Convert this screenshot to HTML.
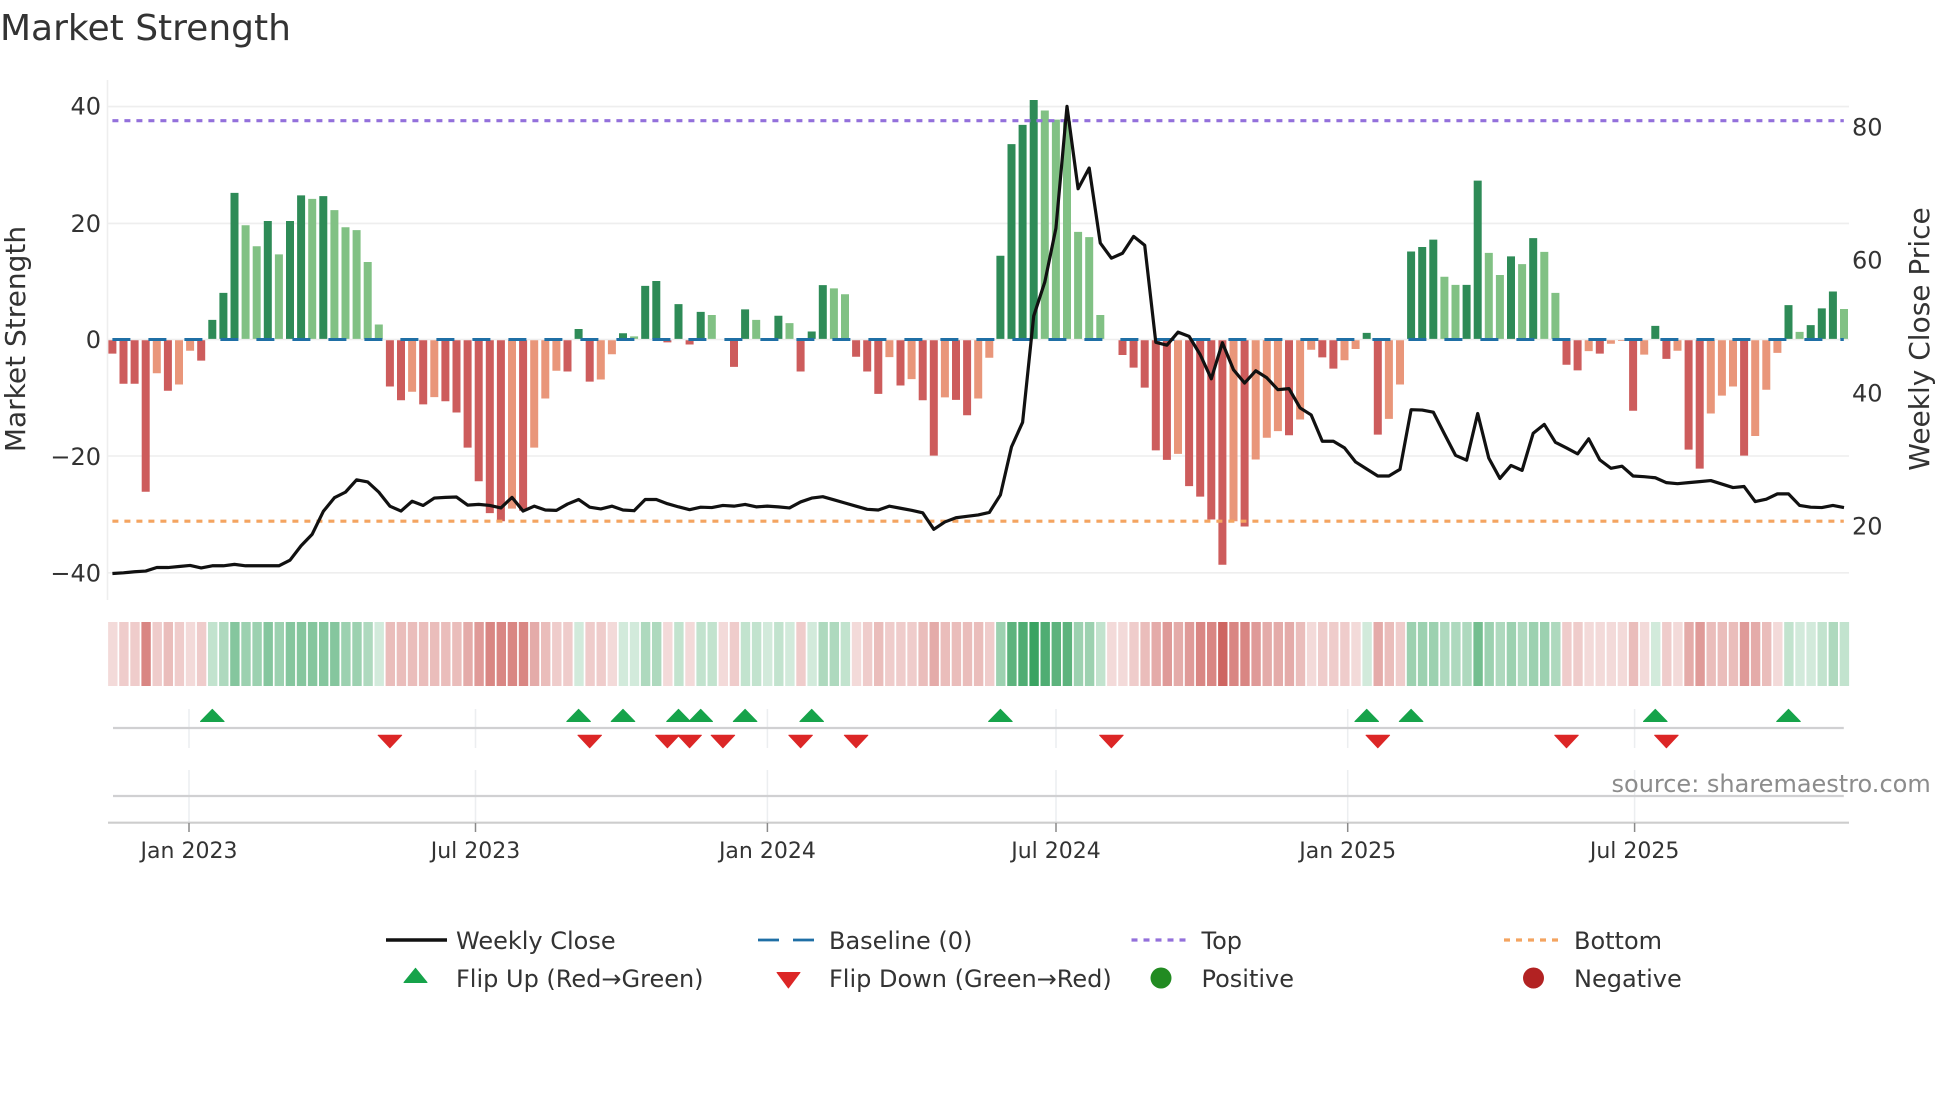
<!DOCTYPE html>
<html lang="en">
<head>
<meta charset="utf-8">
<title>Market Strength</title>
<style>
html,body{margin:0;padding:0;background:#fff;width:1960px;height:1102px;overflow:hidden}
svg{display:block}
text{font-family:"DejaVu Sans","Liberation Sans",sans-serif;fill:#333}
.ns{vector-effect:non-scaling-stroke;fill:none}
.t{font-size:24px}
.x{font-size:22px;text-anchor:middle}
.l{font-size:24px}
</style>
</head>
<body>
<svg width="1960" height="1102" viewBox="0 0 1960 1102" xmlns="http://www.w3.org/2000/svg">
<defs>
<path id="u" d="M-11.8 721.5H11.8L0 709.3Z" fill="#16a34a" stroke="#16a34a" stroke-width="1" stroke-linejoin="round"/>
<path id="d" d="M-11.8 735.2H11.8L0 747.8Z" fill="#dc2626" stroke="#dc2626" stroke-width="1" stroke-linejoin="round"/>
</defs>
<text x="0" y="40" font-size="36">Market Strength</text>

<!-- grid -->
<g stroke="#eeeeee" stroke-width="1.6" fill="none">
<path d="M107.5 80V600"/>
<path d="M108 106.6H1849M108 223.4H1849M108 456H1849M108 572.8H1849M108 339.5H1849"/>
</g>

<!-- bars -->
<g transform="translate(112.4,60) scale(11.1,0.35075)">
<path class="ns" stroke="#2e8b57" stroke-width="8" d="M9 795V741M10 795V664M11 795V379M14 795V459M16 795V459M17 795V386M19 795V388M42 795V767M46 795V779M48 795V644M49 795V630M51 795V696M53 795V718M57 795V711M60 795V729M63 795V774M64 795V642M80 795V558M81 795V240M82 795V185M83 795V114M113 795V778M117 795V546M118 795V533M119 795V512M122 795V641M123 795V344M126 795V560M128 795V508M139 795V758M151 795V699M153 795V756M154 795V708M155 795V660"/>
<path class="ns" stroke="#81c184" stroke-width="8" d="M12 795V471M13 795V531M15 795V554M18 795V396M20 795V428M21 795V477M22 795V485M23 795V576M24 795V754M47 795V788M54 795V727M58 795V741M61 795V750M65 795V651M66 795V668M84 795V144M85 795V170M86 795V175M87 795V490M88 795V505M89 795V727M120 795V618M121 795V641M124 795V550M125 795V613M127 795V582M129 795V547M130 795V664M152 795V775M156 795V710"/>
<path class="ns" stroke="#cd5c5c" stroke-width="8" d="M0 799V837M1 799V923M2 799V923M3 799V1231M5 799V943M8 799V857M25 799V931M26 799V970M28 799V982M30 799V973M31 799V1005M32 799V1105M33 799V1201M34 799V1292M35 799V1315M37 799V1285M41 799V888M43 799V917M50 799V805M52 799V811M56 799V875M62 799V888M67 799V846M68 799V888M69 799V952M71 799V928M73 799V970M74 799V1128M76 799V969M77 799V1013M91 799V841M92 799V877M93 799V934M94 799V1113M95 799V1140M97 799V1215M98 799V1245M99 799V1310M100 799V1439M102 799V1330M106 799V1070M109 799V848M110 799V880M114 799V1068M131 799V869M132 799V885M134 799V837M137 799V1000M140 799V852M142 799V1111M143 799V1165M147 799V1128"/>
<path class="ns" stroke="#e9967a" stroke-width="8" d="M4 799V893M6 799V925M7 799V829M27 799V946M29 799V961M36 799V1279M38 799V1105M39 799V965M40 799V886M44 799V911M45 799V839M70 799V847M72 799V910M75 799V962M78 799V965M79 799V849M96 799V1123M101 799V1315M103 799V1139M104 799V1077M105 799V1058M107 799V1025M108 799V826M111 799V856M112 799V824M115 799V1023M116 799V925M133 799V830M135 799V809M136 799V801M138 799V840M141 799V829M144 799V1008M145 799V957M146 799V931M148 799V1072M149 799V940M150 799V835"/>
</g>

<!-- reference lines -->
<path d="M112.4 339.5H1843.8" stroke="#1f6fa5" stroke-width="3" stroke-dasharray="18 18" fill="none"/>
<path d="M112.4 120.7H1843.8" stroke="#9370db" stroke-width="3.2" stroke-dasharray="6 6" fill="none"/>
<path d="M112.4 521.2H1843.8" stroke="#f4a460" stroke-width="3.2" stroke-dasharray="6 6" fill="none"/>

<!-- price line -->
<g transform="translate(112.4,60) scale(11.1,0.35075)">
<polyline class="ns" stroke="#111111" stroke-width="3.2" stroke-linejoin="round" points="0,1464 1,1462 2,1459 3,1457 4,1447 5,1447 6,1444 7,1441 8,1448 9,1442 10,1442 11,1438 12,1442 13,1442 14,1442 15,1442 16,1426 17,1385 18,1352 19,1287 20,1248 21,1232 22,1197 23,1203 24,1232 25,1272 26,1286 27,1258 28,1270 29,1249 30,1247 31,1246 32,1269 33,1267 34,1270 35,1277 36,1247 37,1286 38,1272 39,1283 40,1284 41,1266 42,1253 43,1275 44,1280 45,1272 46,1283 47,1285 48,1253 49,1253 50,1265 51,1274 52,1282 53,1275 54,1276 55,1270 56,1272 57,1267 58,1274 59,1272 60,1274 61,1277 62,1260 63,1249 64,1245 65,1254 66,1263 67,1272 68,1281 69,1283 70,1272 71,1278 72,1284 73,1291 74,1338 75,1317 76,1305 77,1301 78,1297 79,1290 80,1240 81,1103 82,1033 83,730 84,633 85,480 86,132 87,367 88,308 89,522 90,565 91,551 92,503 93,528 94,805 95,813 96,776 97,788 98,840 99,909 100,806 101,883 102,921 103,886 104,906 105,940 106,937 107,992 108,1012 109,1087 110,1087 111,1106 112,1146 113,1166 114,1186 115,1186 116,1167 117,997 118,998 119,1004 120,1066 121,1127 122,1141 123,1008 124,1135 125,1193 126,1156 127,1170 128,1064 129,1039 130,1090 131,1106 132,1123 133,1080 134,1140 135,1164 136,1158 137,1186 138,1188 139,1191 140,1205 141,1208 142,1205 143,1202 144,1199 145,1209 146,1219 147,1216 148,1259 149,1252 150,1237 151,1237 152,1270 153,1275 154,1276 155,1270 156,1276"/>
</g>

<!-- heat strip -->
<g transform="translate(112.8,622) scale(11.1,64)">
<g stroke="#b9231e">
<path class="ns" stroke-width="9.4" stroke-opacity=".17" d="M0 0V1M7 0V1M45 0V1M50 0V1M52 0V1M55 0V1M67 0V1M90 0V1M91 0V1M108 0V1M112 0V1M133 0V1M134 0V1M135 0V1M136 0V1M138 0V1M141 0V1M150 0V1"/>
<path class="ns" stroke-width="9.4" stroke-opacity=".23" d="M1 0V1M2 0V1M4 0V1M6 0V1M8 0V1M40 0V1M41 0V1M43 0V1M44 0V1M56 0V1M62 0V1M68 0V1M70 0V1M71 0V1M72 0V1M79 0V1M92 0V1M109 0V1M110 0V1M111 0V1M116 0V1M131 0V1M132 0V1M140 0V1"/>
<path class="ns" stroke-width="9.4" stroke-opacity=".3" d="M5 0V1M25 0V1M26 0V1M27 0V1M28 0V1M29 0V1M30 0V1M31 0V1M39 0V1M69 0V1M73 0V1M75 0V1M76 0V1M77 0V1M78 0V1M93 0V1M107 0V1M115 0V1M137 0V1M144 0V1M145 0V1M146 0V1M149 0V1"/>
<path class="ns" stroke-width="9.4" stroke-opacity=".38" d="M32 0V1M38 0V1M74 0V1M94 0V1M96 0V1M104 0V1M105 0V1M106 0V1M114 0V1M142 0V1M148 0V1"/>
<path class="ns" stroke-width="9.4" stroke-opacity=".46" d="M33 0V1M95 0V1M97 0V1M103 0V1M143 0V1M147 0V1"/>
<path class="ns" stroke-width="9.4" stroke-opacity=".55" d="M3 0V1M34 0V1M35 0V1M36 0V1M37 0V1M98 0V1M99 0V1M101 0V1M102 0V1"/>
<path class="ns" stroke-width="9.4" stroke-opacity=".7" d="M100 0V1"/>
</g>
<g stroke="#1e964b">
<path class="ns" stroke-width="9.4" stroke-opacity=".2" d="M24 0V1M42 0V1M46 0V1M47 0V1M59 0V1M61 0V1M63 0V1M113 0V1M139 0V1M152 0V1M153 0V1"/>
<path class="ns" stroke-width="9.4" stroke-opacity=".27" d="M9 0V1M51 0V1M53 0V1M54 0V1M57 0V1M58 0V1M60 0V1M66 0V1M89 0V1M151 0V1M154 0V1M156 0V1"/>
<path class="ns" stroke-width="9.4" stroke-opacity=".36" d="M10 0V1M23 0V1M48 0V1M49 0V1M64 0V1M65 0V1M120 0V1M121 0V1M122 0V1M125 0V1M127 0V1M130 0V1M155 0V1"/>
<path class="ns" stroke-width="9.4" stroke-opacity=".44" d="M12 0V1M13 0V1M15 0V1M21 0V1M22 0V1M80 0V1M87 0V1M88 0V1M117 0V1M118 0V1M119 0V1M124 0V1M126 0V1M128 0V1M129 0V1"/>
<path class="ns" stroke-width="9.4" stroke-opacity=".54" d="M11 0V1M14 0V1M16 0V1M17 0V1M18 0V1M19 0V1M20 0V1"/>
<path class="ns" stroke-width="9.4" stroke-opacity=".62" d="M123 0V1"/>
<path class="ns" stroke-width="9.4" stroke-opacity=".72" d="M81 0V1M85 0V1M86 0V1"/>
<path class="ns" stroke-width="9.4" stroke-opacity=".78" d="M82 0V1M84 0V1"/>
<path class="ns" stroke-width="9.4" stroke-opacity=".88" d="M83 0V1"/>
</g>
</g>

<!-- lower panel vertical grid -->
<g stroke="#eceef0" stroke-width="1.5" fill="none">
<path d="M189 709V748M189 770V822M475.5 709V748M475.5 770V822M767.4 709V748M767.4 770V822M1056 709V748M1056 770V822M1347.7 709V748M1347.7 770V822M1634.6 709V748M1634.6 770V822"/>
</g>
<g stroke="#d0d0d2" stroke-width="2.2" fill="none">
<path d="M113 728H1843.8M113 796H1843.8"/>
</g>
<path d="M108 822.7H1849" stroke="#cdcdcd" stroke-width="2.2" fill="none"/>
<path d="M189 823V832M475.5 823V832M767.4 823V832M1056 823V832M1347.7 823V832M1634.6 823V832" stroke="#8a8a8a" stroke-width="1.5" fill="none"/>

<!-- flip markers -->
<use href="#u" x="212.3"/><use href="#u" x="578.6"/><use href="#u" x="623"/><use href="#u" x="678.5"/><use href="#u" x="700.7"/><use href="#u" x="745.1"/><use href="#u" x="811.7"/><use href="#u" x="1000.4"/><use href="#u" x="1366.7"/><use href="#u" x="1411.1"/><use href="#u" x="1655.3"/><use href="#u" x="1788.5"/>
<use href="#d" x="389.9"/><use href="#d" x="589.7"/><use href="#d" x="667.4"/><use href="#d" x="689.6"/><use href="#d" x="722.9"/><use href="#d" x="800.6"/><use href="#d" x="856.1"/><use href="#d" x="1111.4"/><use href="#d" x="1377.8"/><use href="#d" x="1566.5"/><use href="#d" x="1666.4"/>

<!-- axis labels -->
<g text-anchor="end">
<text class="t" x="101" y="114.5">40</text>
<text class="t" x="101" y="231.8">20</text>
<text class="t" x="101" y="348">0</text>
<text class="t" x="101" y="465">−20</text>
<text class="t" x="101" y="581.5">−40</text>
</g>
<text class="t" x="1852" y="135.4">80</text>
<text class="t" x="1852" y="268.6">60</text>
<text class="t" x="1852" y="401.6">40</text>
<text class="t" x="1852" y="534.5">20</text>
<text transform="translate(25,339) rotate(-90)" font-size="28" text-anchor="middle">Market Strength</text>
<text transform="translate(1929,339) rotate(-90)" font-size="28" text-anchor="middle">Weekly Close Price</text>

<text class="x" x="189" y="858">Jan 2023</text>
<text class="x" x="475.5" y="858">Jul 2023</text>
<text class="x" x="767.4" y="858">Jan 2024</text>
<text class="x" x="1056" y="858">Jul 2024</text>
<text class="x" x="1347.7" y="858">Jan 2025</text>
<text class="x" x="1634.6" y="858">Jul 2025</text>

<text x="1611.5" y="792" font-size="24" style="fill:#8c8c8c">source: sharemaestro.com</text>

<!-- legend -->
<path d="M386 940H447" stroke="#111" stroke-width="3.4" fill="none"/>
<path d="M758 940H779M793 940H814" stroke="#1f6fa5" stroke-width="2.8" fill="none"/>
<path d="M1131.5 940H1187" stroke="#9370db" stroke-width="3.2" stroke-dasharray="6 6" fill="none"/>
<path d="M1504 940H1560" stroke="#f4a460" stroke-width="3.2" stroke-dasharray="6 6" fill="none"/>
<path d="M404 982.5H427L415.5 968.3Z" fill="#16a34a" stroke="#16a34a" stroke-width="1" stroke-linejoin="round"/>
<path d="M777 972.5H800L788.4 988Z" fill="#dc2626" stroke="#dc2626" stroke-width="1" stroke-linejoin="round"/>
<circle cx="1161" cy="978" r="10.5" fill="#228b22"/>
<circle cx="1533.5" cy="978" r="10.5" fill="#b22222"/>
<text class="l" x="456" y="949">Weekly Close</text>
<text class="l" x="829" y="949">Baseline (0)</text>
<text class="l" x="1201.5" y="949">Top</text>
<text class="l" x="1574" y="949">Bottom</text>
<text class="l" x="456" y="987">Flip Up (Red→Green)</text>
<text class="l" x="829" y="987">Flip Down (Green→Red)</text>
<text class="l" x="1201.5" y="987">Positive</text>
<text class="l" x="1574" y="987">Negative</text>
</svg>
</body>
</html>
